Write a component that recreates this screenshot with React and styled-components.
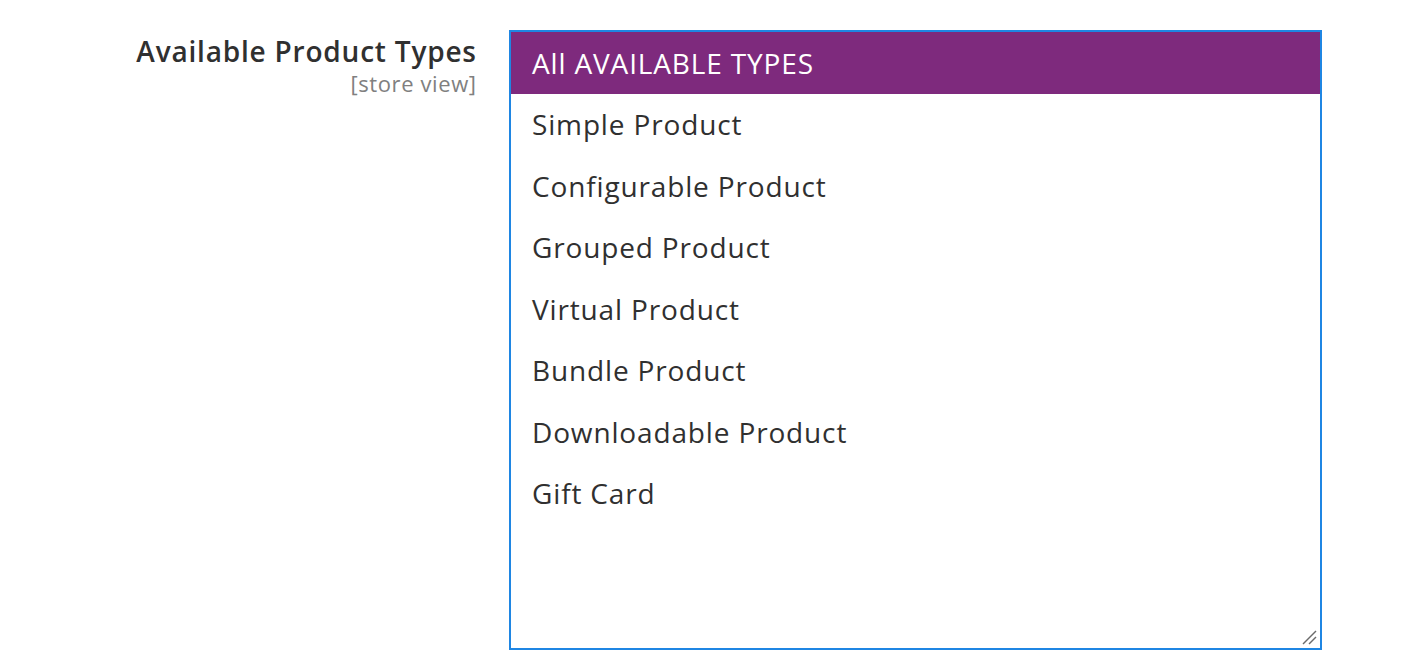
import React from 'react';
import styled, { createGlobalStyle } from 'styled-components';

const GlobalStyle = createGlobalStyle`
  html, body {
    margin: 0;
    padding: 0;
    background: #ffffff;
    font-family: "Open Sans", "Liberation Sans", sans-serif;
  }
`;

const Field = styled.div`
  display: flex;
  align-items: flex-start;
  gap: 33px;
  padding-top: 30px;
`;

const LabelCol = styled.div`
  width: 476px;
  display: flex;
  flex-direction: column;
  align-items: flex-end;
  padding-top: 3px;
`;

const Label = styled.span`
  font-size: 28px;
  line-height: 36px;
  font-weight: 600;
  letter-spacing: 0.8px;
  margin-right: -0.8px;
  color: #303030;
`;

const Scope = styled.span`
  font-size: 22px;
  line-height: 28px;
  letter-spacing: 0.6px;
  margin-right: -0.6px;
  color: #808080;
`;

const ListBox = styled.div`
  position: relative;
  box-sizing: border-box;
  width: 813px;
  height: 620px;
  border: 2px solid #1f86e3;
  background: #ffffff;
  overflow: hidden;
`;

const Option = styled.div`
  height: 61.5px;
  display: flex;
  align-items: center;
  padding-left: 21px;
  font-size: 28px;
  letter-spacing: 0.85px;
  color: ${(p) => (p.selected ? '#ffffff' : '#303030')};
  background: ${(p) => (p.selected ? '#7e2a7d' : 'transparent')};
`;

const Grip = styled.svg`
  position: absolute;
  right: 3px;
  bottom: 3px;
`;

const types = [
  'All AVAILABLE TYPES',
  'Simple Product',
  'Configurable Product',
  'Grouped Product',
  'Virtual Product',
  'Bundle Product',
  'Downloadable Product',
  'Gift Card',
];

const App = () => (
  <>
    <GlobalStyle />
    <Field>
      <LabelCol>
        <Label>Available Product Types</Label>
        <Scope>[store view]</Scope>
      </LabelCol>
      <ListBox>
        {types.map((t, i) => (
          <Option key={t} selected={i === 0}>
            {t}
          </Option>
        ))}
        <Grip width="16" height="16" viewBox="0 0 16 16">
          <line x1="2" y1="15" x2="15" y2="2" stroke="#6b6b6b" strokeWidth="1.5" />
          <line x1="8" y1="15" x2="15" y2="8" stroke="#6b6b6b" strokeWidth="1.5" />
        </Grip>
      </ListBox>
    </Field>
  </>
);

export default App;
